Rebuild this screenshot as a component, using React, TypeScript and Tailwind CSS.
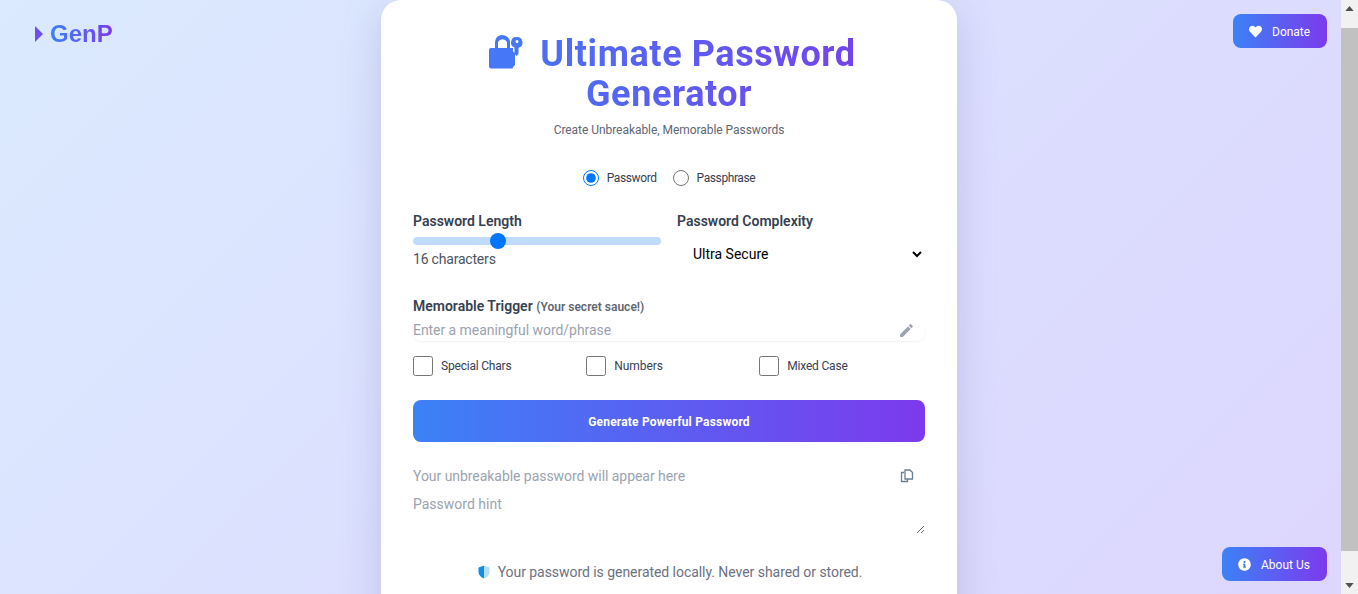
import React from 'react';
import { FaHeart, FaInfoCircle } from 'react-icons/fa';
import { MdEdit } from 'react-icons/md';

const font = "font-['Roboto',sans-serif]";

function LockIcon() {
  return (
    <svg viewBox="0 0 36 36" className="w-[36px] h-[36px] shrink-0 text-[#4577f6]" fill="currentColor">
      <path d="M8 3a8 8 0 0 1 13 4v7h-3V8a5 5 0 0 0-9 0v6H6V8a8 8 0 0 1 2-5z" transform="translate(1 0)" />
      <path d="M1 16a2 2 0 0 1 2-2h22v3.500l2 1.500v12l-1.500 1.500-1 2H3a2 2 0 0 1-2-2z" />
      <path d="M29 3a5.500 5.500 0 0 1 1.500 10.800V20l-2 2-2-2v-6.400A5.500 5.500 0 0 1 29 3zm0 3a1.500 1.500 0 1 0 0 3 1.500 1.500 0 0 0 0-3z" />
    </svg>
  );
}

function CopyIcon() {
  return (
    <svg viewBox="0 0 14 14" className="w-[14px] h-[14px] text-[#6b7f8f]" fill="none" stroke="currentColor" strokeWidth="1.300">
      <path d="M4 3.500H1.500v9h6V10" />
      <path d="M5 1h5l2.500 2.500V10H5z" />
    </svg>
  );
}

function ShieldIcon() {
  return (
    <svg viewBox="0 0 12 14" className="w-3 h-[14px]">
      <path d="M6 0.500 0.500 2.500v4c0 3.500 2.500 5.800 5.500 7z" fill="#0d8fe8" />
      <path d="M6 0.500l5.500 2v4c0 3.500-2.500 5.800-5.500 7z" fill="#b5dcf8" />
    </svg>
  );
}

export default function App() {
  return (
    <div className={`${font} relative flex h-[594px] w-full overflow-hidden`}>
      <main className="relative flex-1 flex justify-center overflow-hidden bg-[linear-gradient(135deg,#dbeafe,#ddd6fe)] pr-[3px]">
        <div className="flex items-center absolute left-[35px] top-[18px] gap-[7px] font-['Liberation_Sans',sans-serif]">
          <svg viewBox="0 0 8 16" className="w-2 h-4 text-[#6d4ff0]" fill="currentColor"><path d="M0 0l8 8-8 8z" /></svg>
          <span className="text-2xl font-bold bg-linear-to-r/srgb from-[#3b82f6] to-[#7c3aed] bg-clip-text text-transparent">GenP</span>
        </div>

        <div className="w-[576px] h-[700px] shrink-0 bg-white rounded-t-[20px] px-8 pt-[34px] shadow-[0_10px_40px_rgba(90,80,170,0.22)]">
          <h1 className="text-[36px] leading-10 font-bold tracking-[0.6px] text-center bg-linear-to-r/srgb from-[#3b82f6] to-[#7c3aed] bg-clip-text text-transparent">
            <span className="inline-flex align-[-4px] ml-[6px] mr-[16px]"><LockIcon /></span>Ultimate Password Generator
          </h1>
          <p className="text-[12px] leading-4 tracking-[-0.05px] text-center text-[#5f6773] mt-[8px]">Create Unbreakable, Memorable Passwords</p>

          <div className="flex justify-center gap-4 mt-[32px] text-[12px] leading-4 tracking-[-0.4px] text-[#374151]">
            <label className="flex items-center gap-2">
              <input type="radio" name="mode" defaultChecked className="w-4 h-4 m-0 accent-[#0075ff]" />
              Password
            </label>
            <label className="flex items-center gap-2">
              <input type="radio" name="mode" className="w-4 h-4 m-0" />
              Passphrase
            </label>
          </div>

          <div className="grid grid-cols-2 gap-4 mt-[25px]">
            <div>
              <div className="text-[14px] leading-5 font-semibold text-[#374151]">Password Length</div>
              <input
                type="range"
                min={8}
                max={32}
                defaultValue={16}
                className="block w-full h-2 mt-[6px] appearance-none rounded-full bg-[#bfdbfe] [&::-webkit-slider-thumb]:appearance-none [&::-webkit-slider-thumb]:w-4 [&::-webkit-slider-thumb]:h-4 [&::-webkit-slider-thumb]:rounded-full [&::-webkit-slider-thumb]:bg-[#0075ff]"
              />
              <div className="text-[14px] leading-5 tracking-[-0.2px] text-[#4b5563] mt-[4px]">16 characters</div>
            </div>
            <div>
              <div className="text-[14px] leading-5 font-semibold text-[#374151]">Password Complexity</div>
              <select defaultValue="Ultra Secure" className="block w-full h-[34px] mt-[6px] pl-3 pr-0 text-[14px] text-black bg-transparent outline-none">
                <option>Ultra Secure</option>
                <option>Strong</option>
              </select>
            </div>
          </div>

          <div className="mt-[25px] text-[14px] leading-5 font-semibold text-[#374151]">
            Memorable Trigger <span className="text-[12px] text-[#5f6773]">(Your secret sauce!)</span>
          </div>
          <div className="flex items-center h-[21px] mt-[3px] rounded-lg shadow-[0_1px_2px_rgba(0,0,0,0.06)] pr-[10px]">
            <input placeholder="Enter a meaningful word/phrase" className="flex-1 text-[14px] tracking-[-0.05px] outline-none placeholder:text-[#9ca3af]" />
            <MdEdit className="w-[17px] h-[17px] text-[#9ca3af]" />
          </div>

          <div className="grid grid-cols-3 gap-[7.500px] mt-[15px] text-[12px] leading-4 text-[#374151]">
            <label className="flex items-center gap-2">
              <input type="checkbox" className="w-5 h-5 m-0" />
              <span className="tracking-[-0.2px]">Special Chars</span>
            </label>
            <label className="flex items-center gap-2">
              <input type="checkbox" className="w-5 h-5 m-0" />
              <span className="tracking-[-0.05px]">Numbers</span>
            </label>
            <label className="flex items-center gap-2">
              <input type="checkbox" className="w-5 h-5 m-0" />
              <span className="tracking-[-0.2px]">Mixed Case</span>
            </label>
          </div>

          <button className="block w-full h-[42px] mt-[24px] pt-[2px] rounded-lg text-white text-[12px] font-bold tracking-[0.2px] bg-linear-to-r/srgb from-[#3b82f6] to-[#7c3aed]">
            Generate Powerful Password
          </button>

          <div className="flex items-center h-5 mt-[24px] pr-[11px]">
            <input readOnly placeholder="Your unbreakable password will appear here" className="flex-1 text-[14px] tracking-[-0.05px] outline-none placeholder:text-[#9ca3af]" />
            <CopyIcon />
          </div>
          <textarea placeholder="Password hint" className="block w-full h-[40px] mt-[8px] text-[14px] leading-5 outline-none placeholder:text-[#9ca3af]" />

          <div className="flex items-center justify-center gap-[8px] mt-[28px] pl-[2px] text-[14px] leading-5 tracking-[-0.05px] text-[#6b7280]">
            <ShieldIcon />
            Your password is generated locally. Never shared or stored.
          </div>
        </div>

        <button className="flex items-center gap-2.5 absolute top-[14px] right-[14px] h-[34px] w-[94px] pl-4 pt-[1px] rounded-lg text-white text-[12px] bg-linear-to-r/srgb from-[#3b82f6] to-[#7c3aed]">
          <FaHeart className="w-[13px] h-[13px]" /> Donate
        </button>
        <button className="flex items-center gap-2.5 absolute top-[547px] right-[14px] h-[34px] w-[105px] pl-4 pt-[1px] rounded-lg text-white text-[12px] bg-linear-to-r/srgb from-[#3b82f6] to-[#7c3aed]">
          <FaInfoCircle className="w-[13px] h-[13px]" /> About Us
        </button>
      </main>

      <div className="flex flex-col items-center w-[17px] shrink-0 bg-[#f1f1f1]">
        <div className="flex items-center justify-center h-[17px] w-full">
          <svg viewBox="0 0 10 6" className="w-[9px] h-[5px] text-[#505050]" fill="currentColor"><path d="M5 0l5 6H0z" /></svg>
        </div>
        <div className="w-full h-[523px] mt-[11px] bg-[#c1c1c1]" />
        <div className="flex-1" />
        <div className="flex items-center justify-center h-[17px] w-full">
          <svg viewBox="0 0 10 6" className="w-[9px] h-[5px] text-[#505050]" fill="currentColor"><path d="M0 0h10L5 6z" /></svg>
        </div>
      </div>
    </div>
  );
}
